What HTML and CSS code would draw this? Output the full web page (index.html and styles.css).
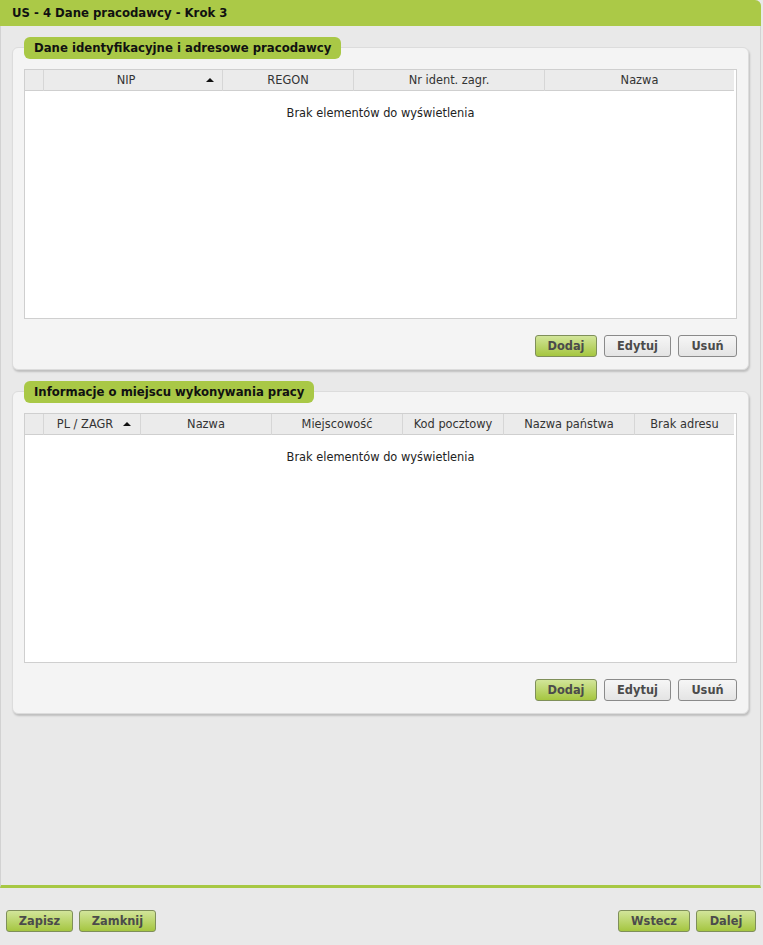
FILE: index.html
```html
<!DOCTYPE html>
<html lang="pl">
<head>
    <meta charset="UTF-8">
    <meta name="viewport" content="width=device-width, initial-scale=1.0">
    <title>US - 4 Dane pracodawcy - Krok 3</title>
    <link rel="stylesheet" href="styles.css">
</head>
<body>
    <div class="window">
        <div class="window-title">US - 4 Dane pracodawcy - Krok 3</div>
        <div class="window-body">
            <div class="fieldset">
                <div class="legend">Dane identyfikacyjne i adresowe pracodawcy</div>
                <div class="grid">
                    <div class="grid-head cols-a">
                        <div class="cell"></div>
                        <div class="cell sorted">NIP<span class="sort-arrow"></span></div>
                        <div class="cell">REGON</div>
                        <div class="cell">Nr ident. zagr.</div>
                        <div class="cell">Nazwa</div>
                    </div>
                    <div class="grid-body">
                        <div class="empty">Brak elementów do wyświetlenia</div>
                    </div>
                </div>
                <div class="actions">
                    <button class="btn btn-green btn-add">Dodaj</button>
                    <button class="btn btn-edit">Edytuj</button>
                    <button class="btn btn-del">Usuń</button>
                </div>
            </div>

            <div class="fieldset">
                <div class="legend">Informacje o miejscu wykonywania pracy</div>
                <div class="grid">
                    <div class="grid-head cols-b">
                        <div class="cell"></div>
                        <div class="cell sorted">PL / ZAGR<span class="sort-arrow"></span></div>
                        <div class="cell">Nazwa</div>
                        <div class="cell">Miejscowość</div>
                        <div class="cell">Kod pocztowy</div>
                        <div class="cell">Nazwa państwa</div>
                        <div class="cell">Brak adresu</div>
                    </div>
                    <div class="grid-body">
                        <div class="empty">Brak elementów do wyświetlenia</div>
                    </div>
                </div>
                <div class="actions">
                    <button class="btn btn-green btn-add">Dodaj</button>
                    <button class="btn btn-edit">Edytuj</button>
                    <button class="btn btn-del">Usuń</button>
                </div>
            </div>
        </div>
    </div>
    <div class="footer">
        <div class="footer-group">
            <button class="btn btn-green btn-save">Zapisz</button>
            <button class="btn btn-green btn-close">Zamknij</button>
        </div>
        <div class="footer-group">
            <button class="btn btn-green btn-back">Wstecz</button>
            <button class="btn btn-green btn-next">Dalej</button>
        </div>
    </div>
</body>
</html>
```

FILE: styles.css
```css
body {
    margin: 0;
    font-family: 'DejaVu Sans', 'Verdana', sans-serif;
    font-size: 11.4px;
    color: #333;
    background-color: #e9e9e9;
    width: 763px;
    height: 945px;
    overflow: hidden;
}
.window {
    width: 761px;
    height: 888px;
    box-sizing: border-box;
    border-left: 1px solid #d2d2d2;
    border-right: 1px solid #d2d2d2;
    border-bottom: 3px solid #a7c843;
    border-top-right-radius: 6px;
    display: flex;
    flex-direction: column;
}
.window-title {
    background-color: #abc947;
    height: 26px;
    line-height: 27px;
    padding-left: 12px;
    font-weight: bold;
    font-size: 11.7px;
    color: #111;
    border-top-right-radius: 6px;
    margin: 0 -1px 0 -1px;
}
.window-body {
    padding: 21px 11px 0 11px;
    flex: 1;
}
.fieldset {
    position: relative;
    background-color: #f4f4f4;
    border: 1px solid #dcdcdc;
    border-radius: 6px;
    box-shadow: 1px 2px 2px rgba(0, 0, 0, 0.18);
    padding: 21px 11px 12px 11px;
    margin-bottom: 21px;
}
.legend {
    position: absolute;
    left: 11px;
    top: -11px;
    background-color: #a9c846;
    border-radius: 6px;
    height: 22px;
    line-height: 23px;
    padding: 0 10px;
    font-weight: bold;
    font-size: 11.7px;
    color: #111;
}
.grid {
    border: 1px solid #cfcfcf;
    background-color: #fff;
    display: flex;
    flex-direction: column;
    height: 248px;
}
.grid-head {
    display: grid;
    height: 20px;
    background-color: #ebebeb;
    border-bottom: 1px solid #cfcfcf;
    margin-right: 2px;
}
.cols-a {
    grid-template-columns: 19px 179px 131px 191px 1fr;
}
.cols-b {
    grid-template-columns: 19px 97px 131px 131px 101px 131px 1fr;
}
.cell {
    position: relative;
    border-right: 1px solid #d6d6d6;
    text-align: center;
    line-height: 21px;
    color: #333;
    white-space: nowrap;
}
.cell:last-child {
    border-right: none;
}
.sorted {
    padding-right: 14px;
}
.sort-arrow {
    position: absolute;
    right: 8px;
    top: 8px;
    border-left: 4px solid transparent;
    border-right: 4px solid transparent;
    border-bottom: 4px solid #111;
}
.cols-b .sort-arrow {
    right: 9px;
}
.grid-body {
    flex: 1;
}
.empty {
    text-align: center;
    padding-top: 15px;
    color: #222;
}
.actions {
    display: flex;
    justify-content: flex-end;
    gap: 7px;
    margin-top: 16px;
}
.btn {
    font-family: 'DejaVu Sans', 'Verdana', sans-serif;
    font-size: 11.4px;
    font-weight: bold;
    color: #4b4b4b;
    height: 22px;
    padding: 0;
    border: 1px solid #8a8a8a;
    border-radius: 3px;
    background: linear-gradient(#f6f6f6, #e4e4e4);
    cursor: pointer;
}
.btn-green {
    border-color: #7f8f5a;
    background: linear-gradient(#d2e59a, #a5c640);
}
.btn-add {
    width: 62px;
}
.btn-edit {
    width: 67px;
}
.btn-del {
    width: 59px;
}
.footer {
    display: flex;
    justify-content: space-between;
    padding: 22px 7px 0 6px;
}
.footer-group {
    display: flex;
    gap: 6px;
}
.btn-save {
    width: 67px;
}
.btn-close {
    width: 77px;
}
.btn-back {
    width: 72px;
}
.btn-next {
    width: 60px;
}
```
